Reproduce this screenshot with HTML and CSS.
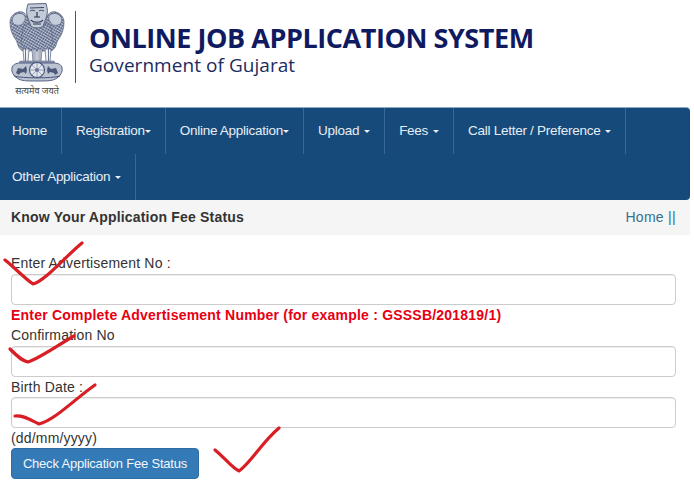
FILE: index.html
```html
<!DOCTYPE html>
<html lang="en">
<head>
<meta charset="utf-8">
<title>Online Job Application System</title>
<link rel="stylesheet" href="styles.css">
</head>
<body>
<div class="page">
  <header class="masthead">
    <div class="emblem">
      <svg class="emblem-art" viewBox="0 0 56 84" width="56" height="84" aria-hidden="true">
        <defs>
          <pattern id="fur" width="2.6" height="2.6" patternUnits="userSpaceOnUse" patternTransform="rotate(30)">
            <rect width="2.6" height="2.6" fill="#9aa5bb"/>
            <path d="M0 .8h1.8" stroke="#2f3c60" stroke-width="1"/>
            <path d="M1 2.1h1.4" stroke="#dfe3ea" stroke-width=".7"/>
          </pattern>
        </defs>
        <path d="M1 19c0-5 4-9 8-10 4-1 8 1 9 5l2 6 2 26-8 2c-4-2-5-5-6-9-1-3-7-8-7-20z" fill="url(#fur)" stroke="#56627f" stroke-width=".7"/>
        <path d="M55 19c0-5-4-9-8-10-4-1-8 1-9 5l-2 6-2 26 8 2c4-2 5-5 6-9 1-3 7-8 7-20z" fill="url(#fur)" stroke="#56627f" stroke-width=".7"/>
        <path d="M4 14c2-4 9-5 12-1 1 3-1 7-4 9-3 1-7 0-8-2-1-2-1-4 0-6z" fill="#c5ccd9" stroke="#56627f" stroke-width=".7"/>
        <path d="M52 14c-2-4-9-5-12-1-1 3 1 7 4 9 3 1 7 0 8-2 1-2 1-4 0-6z" fill="#c5ccd9" stroke="#56627f" stroke-width=".7"/>
        <path d="M14 24c3-3 6-4 7-3 4 5 10 5 14 0 1-1 4 0 7 3l2 16-6 8H18l-6-8z" fill="url(#fur)" stroke="#56627f" stroke-width=".6"/>
        <path d="M19 1l18-.5 1 4c1 4 0 9-2 13l-2 6c-3 2-9 2-12 0l-2-6c-2-4-3-9-2-13z" fill="#c4cbd8" stroke="#3c4868" stroke-width=".8"/>
        <path d="M21 5l14-.5M21 8c2-1 4-1 5 0M30 8c1-1 4-1 5 0" stroke="#3c4868" stroke-width="1" fill="none"/>
        <path d="M28 9v5M25 14h6M22 17c2 3 10 3 12 0M24 21h8" stroke="#27324f" stroke-width="1.2" fill="none"/>
        <path d="M14 46l1 13h4l1-13zM23 46l1 13h3V46zM29 46v13h3l1-13zM36 46l1 13h4l1-13z" fill="#eef0f4" stroke="#56627f" stroke-width=".7"/>
        <path d="M16.500 46v13M25 46v13M31 46v13M39.500 46v13" stroke="#6a7590" stroke-width="1"/>
        <path d="M11 58h34l1 3H10z" fill="#8d98b0" stroke="#56627f" stroke-width=".5"/>
        <path d="M3 65c0-3 4-5 8-5h34c4 0 8 2 8 5 1 4-2 8-5 10-4 3-9 3-20 3s-16 0-20-3c-3-2-6-6-5-10z" fill="#bcc4d2" stroke="#46527a" stroke-width=".9"/>
        <path d="M5 73c8 2.500 38 2.500 46 0" stroke="#46527a" stroke-width="1" fill="none"/>
        <circle cx="28" cy="67" r="7.500" fill="#e3e6ec" stroke="#46527a" stroke-width="1.100"/>
        <circle cx="28" cy="67" r="1.800" fill="#46527a"/>
        <path d="M28 60v14M21 67h14M23 62l10 10M33 62L23 72" stroke="#69749a" stroke-width=".6"/>
        <path d="M7 70l2-5 5 1 3-3 1 4-1 4-2-2-4 1-1 2z" fill="#4c5878"/>
        <path d="M49 70l-2-5-5 1-3-3-1 4 1 4 2-2 4 1 1 2z" fill="#4c5878"/>
      </svg>
      <span class="motto">सत्यमेव जयते</span>
    </div>
    <div class="titles">
      <h1 class="title">ONLINE JOB APPLICATION SYSTEM</h1>
      <p class="subtitle">Government of Gujarat</p>
    </div>
  </header>

  <nav class="navbar">
    <ul class="nav-list">
      <li class="nav-item"><a class="nav-link">Home</a></li>
      <li class="nav-item"><a class="nav-link">Registration<span class="caret caret-tight"></span></a></li>
      <li class="nav-item"><a class="nav-link">Online Application<span class="caret caret-tight"></span></a></li>
      <li class="nav-item"><a class="nav-link">Upload<span class="caret"></span></a></li>
      <li class="nav-item"><a class="nav-link">Fees<span class="caret"></span></a></li>
      <li class="nav-item"><a class="nav-link">Call Letter / Preference<span class="caret"></span></a></li>
      <li class="nav-item"><a class="nav-link">Other Application<span class="caret"></span></a></li>
    </ul>
  </nav>

  <div class="crumbs">
    <strong class="crumbs-title">Know Your Application Fee Status</strong>
    <span class="crumbs-link">Home ||</span>
  </div>

  <form class="fee-form">
    <label class="field-label label-first">Enter Advertisement No :</label>
    <input class="field" type="text">
    <p class="notice">Enter Complete Advertisement Number (for example : GSSSB/201819/1)</p>
    <label class="field-label label-second">Confirmation No</label>
    <input class="field" type="text">
    <label class="field-label">Birth Date :</label>
    <input class="field" type="text">
    <p class="hint">(dd/mm/yyyy)</p>
    <button class="submit" type="button">Check Application Fee Status</button>
  </form>

  <svg class="ink" viewBox="0 0 694 484" width="694" height="484" aria-hidden="true">
    <path d="M5 260C14 267 24 278 33 284 45 281 66 256 82 243" />
    <path d="M10 349C16 355 22 361 28 362 42 357 58 345 74 336" />
    <path d="M15 416C24 415 30 420 39 424 55 420 76 398 95 385" />
    <path d="M215 450C224 457 232 468 239 471 250 464 262 442 279 428" />
  </svg>
</div>
</body>
</html>
```

FILE: styles.css
```css
* { box-sizing: border-box; }
html, body { margin: 0; padding: 0; background: #fff; }
body { font-family: "Liberation Sans", Arial, sans-serif; font-size: 14px; color: #333; }
.page { position: relative; width: 694px; height: 484px; overflow: hidden; }

.masthead { display: flex; height: 107px; padding: 3px 0 0 9px; }
.emblem { display: flex; flex-direction: column; align-items: center; width: 56px; }
.emblem-art { display: block; flex: none; }
.motto { font-family: "Noto Sans", "DejaVu Sans", sans-serif; font-size: 9px; line-height: 9px; margin-top: -1px; color: #444; white-space: nowrap; }
.titles { margin: 8px 0 0 10px; padding: 11px 0 0 13px; height: 72px; border-left: 1px solid #555; }
.title { margin: 0; font-family: "Open Sans", sans-serif; font-weight: 700; font-size: 27px; line-height: 32px; letter-spacing: -0.45px; color: #101a60; white-space: nowrap; }
.subtitle { margin: 0; font-family: "Open Sans", sans-serif; font-size: 19px; line-height: 23px; letter-spacing: 0.05px; color: #1c2c5e; white-space: nowrap; }

.navbar { width: 690px; height: 93px; background: #164a7b; border-top: 1px solid #8fa9c2; border-radius: 0 4px 4px 0; }
.nav-list { display: flex; flex-wrap: wrap; margin: 0 0 0 -2px; padding: 0; list-style: none; }
.nav-item { height: 46px; border-right: 1px solid #3a6894; }
.nav-link { display: block; padding: 0 14px; line-height: 45px; color: #e8eef4; font-size: 13.5px; letter-spacing: -0.27px; white-space: nowrap; }
.caret { display: inline-block; margin-left: 5px; vertical-align: middle; border-top: 3px solid #e8eef4; border-left: 3px solid transparent; border-right: 3px solid transparent; }
.caret-tight { margin-left: 0; }

.crumbs { display: flex; justify-content: space-between; align-items: center; width: 690px; height: 35px; padding: 0 14px 2px 11px; background: #f5f5f5; }
.crumbs-title { font-size: 14px; letter-spacing: 0.19px; color: #333; }
.crumbs-link { font-size: 14px; letter-spacing: 0.3px; color: #337192; }

.fee-form { display: block; padding: 18px 0 0 11px; width: 676px; }
.field-label { display: block; height: 20px; font-size: 14px; line-height: 20px; letter-spacing: 0.17px; color: #333; }
.label-first { height: 21px; }
.label-second { height: 21px; }
.field { display: block; width: 100%; height: 31px; padding: 6px 12px; background: #fff; border: 1px solid #ccc; border-radius: 4px; box-shadow: inset 0 1px 1px rgba(0,0,0,.075); }
.notice { margin: 0; height: 20px; font-size: 14px; font-weight: 700; line-height: 20px; letter-spacing: 0.21px; color: #e60012; white-space: nowrap; }
.hint { margin: 0; height: 20px; font-size: 14px; line-height: 20px; letter-spacing: 0.17px; color: #333; }
.submit { display: block; width: 188px; height: 31px; padding: 0; background: #337ab7; border: 1px solid #2e6da4; border-radius: 4px; color: #f2f6fa; font-family: inherit; font-size: 13px; letter-spacing: -0.2px; }

.ink { position: absolute; left: 0; top: 0; pointer-events: none; }
.ink path { fill: none; stroke: #d81f26; stroke-width: 3.2; stroke-linecap: round; stroke-linejoin: round; }
```
